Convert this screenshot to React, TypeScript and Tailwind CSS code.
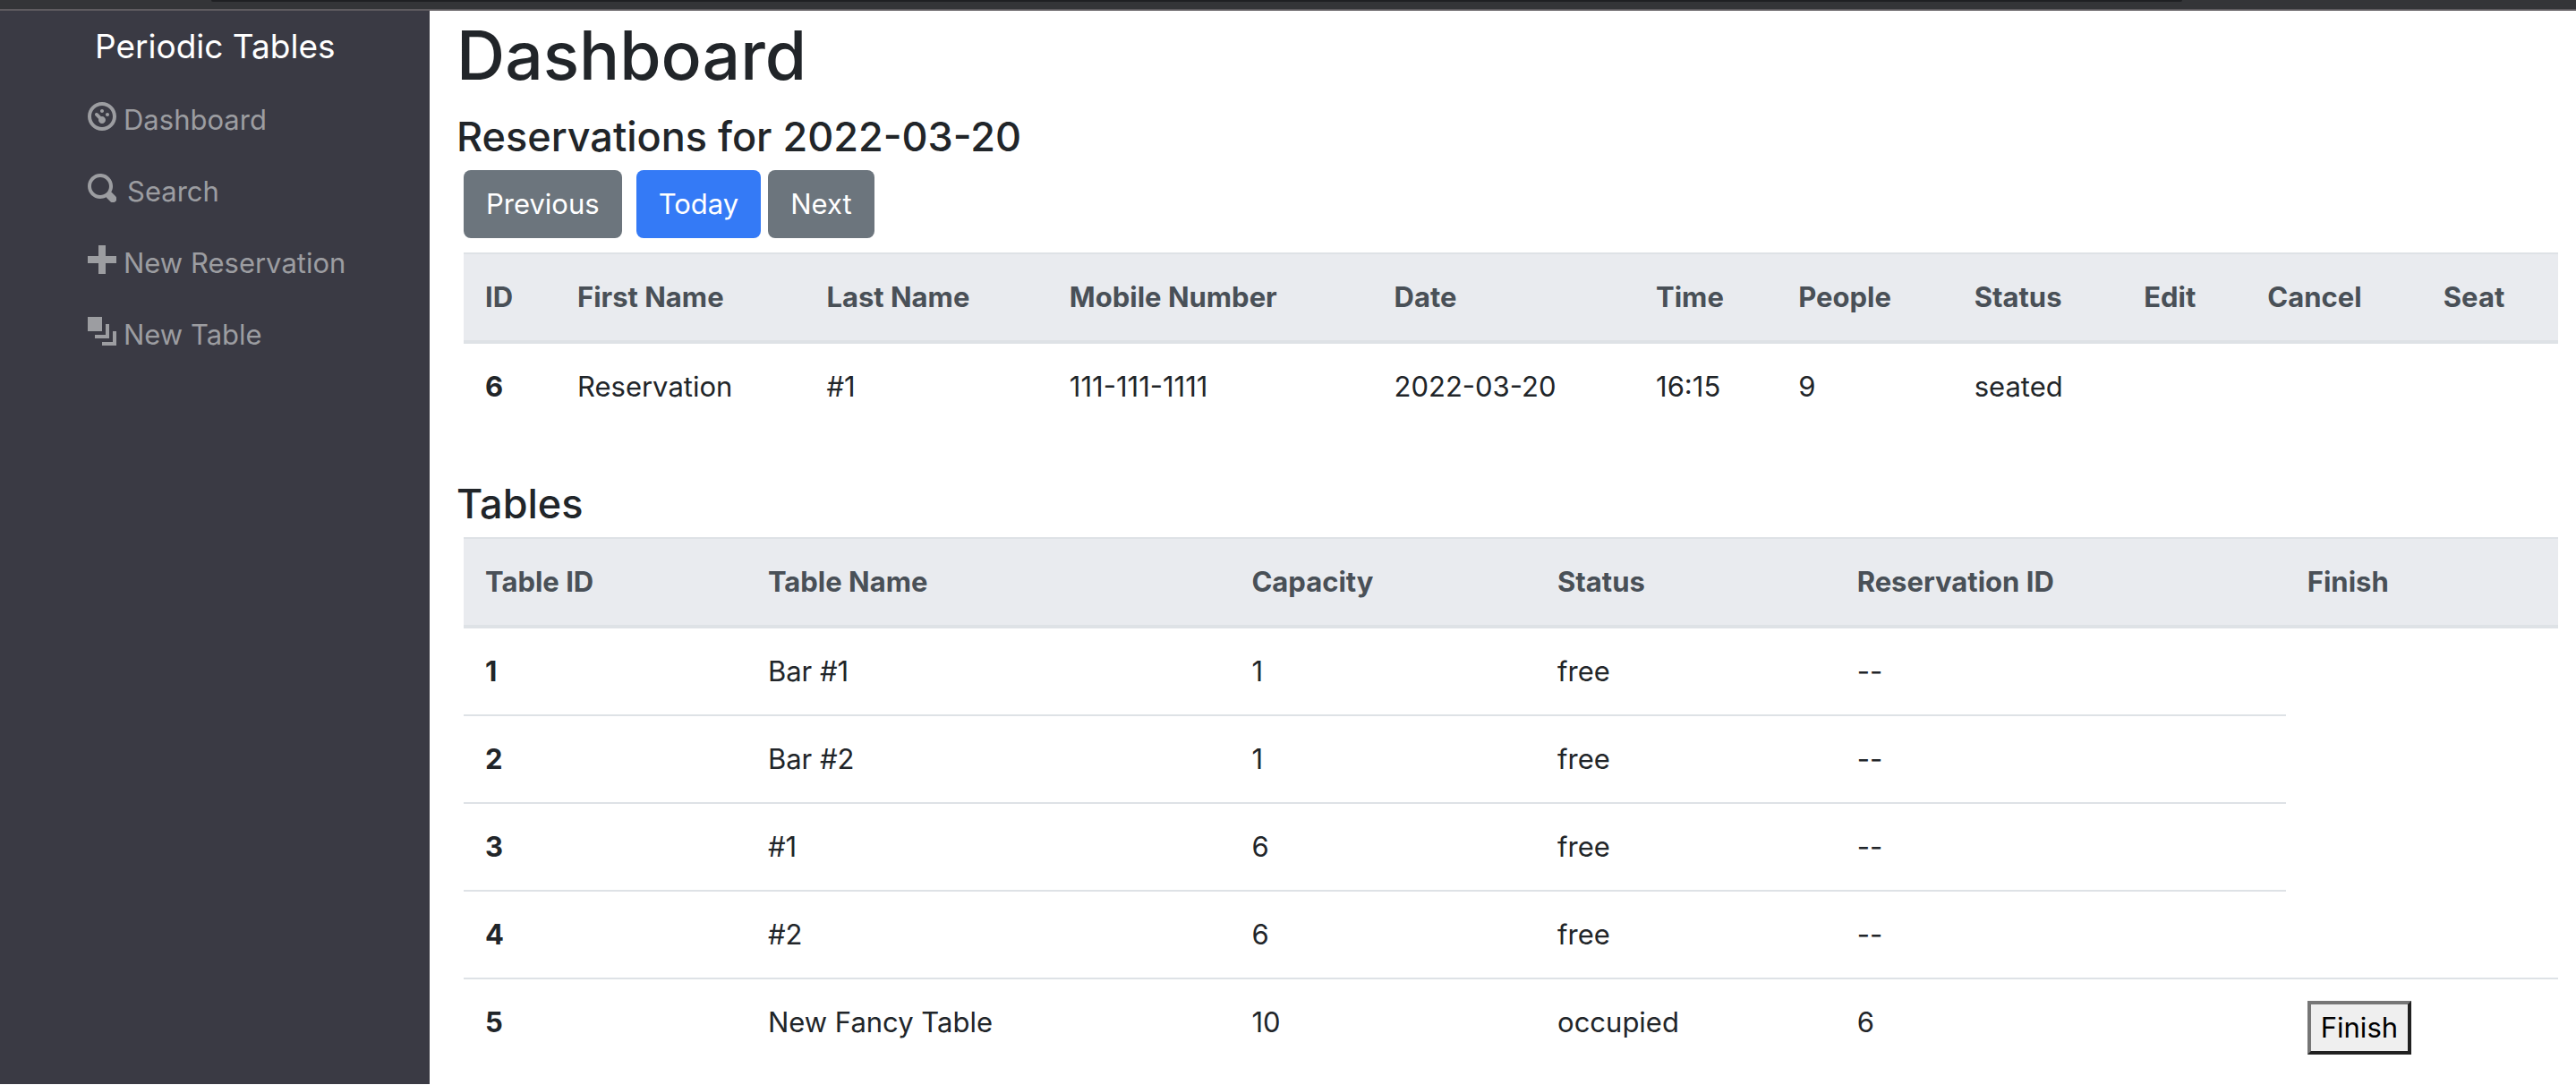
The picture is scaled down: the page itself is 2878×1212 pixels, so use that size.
import React from "react";

const ICONS = {
  dashboard:
    "M4 0c-2.2 0-4 1.8-4 4s1.8 4 4 4 4-1.8 4-4-1.8-4-4-4zm0 1c1.66 0 3 1.34 3 3s-1.34 3-3 3-3-1.34-3-3 1.34-3 3-3zm0 1c-.28 0-.5.22-.5.5s.22.5.5.5.5-.22.5-.5-.22-.5-.5-.5zm-1.66 1a.5.5 0 0 0-.19.84l.91.91c-.02.08-.06.16-.06.25 0 .55.45 1 1 1s1-.45 1-1-.45-1-1-1c-.09 0-.17.04-.25.06l-.91-.91a.5.5 0 0 0-.44-.16.5.5 0 0 0-.06 0zm3.16 0c-.28 0-.5.22-.5.5s.22.5.5.5.5-.22.5-.5-.22-.5-.5-.5z",
  search:
    "M3.5 0c-1.93 0-3.5 1.57-3.5 3.5s1.57 3.5 3.5 3.5c.59 0 1.17-.14 1.66-.41a1 1 0 0 0 .13.13l1 1a1.02 1.02 0 1 0 1.44-1.44l-1-1a1 1 0 0 0-.16-.13c.27-.49.44-1.06.44-1.66 0-1.93-1.55-3.5-3.5-3.5zm0 1c1.39 0 2.5 1.11 2.5 2.5 0 .66-.24 1.27-.66 1.72-.01.01-.02.02-.03.03a1 1 0 0 0-.13.13c-.44.4-1.04.63-1.69.63-1.39 0-2.5-1.11-2.5-2.5s1.11-2.5 2.5-2.5z",
  plus: "M3 0v3h-3v2h3v3h2v-3h3v-2h-3v-3h-2z",
  layers: "M0 0v4h4v-4h-4zm5 2v3h-3v1h4v-4h-1zm2 2v3h-3v1h4v-4h-1z",
};

const NAV: { label: string; icon: keyof typeof ICONS; gap: string }[] = [
  { label: "Dashboard", icon: "dashboard", gap: "gap-2" },
  { label: "Search", icon: "search", gap: "gap-3" },
  { label: "New Reservation", icon: "plus", gap: "gap-2" },
  { label: "New Table", icon: "layers", gap: "gap-2" },
];

const RESERVATION_COLUMNS = [
  { label: "ID", width: "w-[4.4%]" },
  { label: "First Name", width: "w-[11.9%]" },
  { label: "Last Name", width: "w-[11.6%]" },
  { label: "Mobile Number", width: "w-[15.5%]" },
  { label: "Date", width: "w-[12.5%]" },
  { label: "Time", width: "w-[6.8%]" },
  { label: "People", width: "w-[8.4%]" },
  { label: "Status", width: "w-[8.1%]" },
  { label: "Edit", width: "w-[5.9%]" },
  { label: "Cancel", width: "w-[8.4%]" },
  { label: "Seat", width: "w-[6.5%]" },
];

const RESERVATIONS = [
  ["6", "Reservation", "#1", "111-111-1111", "2022-03-20", "16:15", "9", "seated", "", "", ""],
];

const TABLE_COLUMNS = [
  { label: "Table ID", width: "w-[13.5%]" },
  { label: "Table Name", width: "w-[23.1%]" },
  { label: "Capacity", width: "w-[14.6%]" },
  { label: "Status", width: "w-[14.3%]" },
  { label: "Reservation ID", width: "w-[21.5%]" },
  { label: "Finish", width: "w-[13%]" },
];

const TABLES = [
  ["1", "Bar #1", "1", "free", "--"],
  ["2", "Bar #2", "1", "free", "--"],
  ["3", "#1", "6", "free", "--"],
  ["4", "#2", "6", "free", "--"],
  ["5", "New Fancy Table", "10", "occupied", "6"],
];

function DataTable({
  id,
  columns,
  rows,
  action,
}: {
  id: string;
  columns: { label: string; width: string }[];
  rows: string[][];
  action?: (row: string[]) => React.ReactNode;
}) {
  return (
    <table aria-labelledby={id} className="w-full table-fixed border-separate border-spacing-0 text-left">
      <thead>
        <tr>
          {columns.map((c) => (
            <th
              key={c.label}
              scope="col"
              className={`${c.width} whitespace-nowrap border-t-2 border-b-4 border-[#dee2e6] bg-[#e9ebef] p-6 font-bold text-[#495057]`}
            >
              {c.label}
            </th>
          ))}
        </tr>
      </thead>
      <tbody className="[&>tr+tr>*]:border-t-2 [&>tr>*]:border-[#dee2e6]">
        {rows.map((row) => {
          const extra = action?.(row);
          return (
            <tr key={row[0]} className="align-top">
              <th scope="row" className="p-6 font-bold">
                {row[0]}
              </th>
              {row.slice(1).map((cell, i) => (
                <td key={i} className="whitespace-nowrap p-6">
                  {cell}
                </td>
              ))}
              {extra && <td className="p-6">{extra}</td>}
            </tr>
          );
        })}
      </tbody>
    </table>
  );
}

export default function App() {
  return (
    <div className="flex min-h-screen flex-col bg-white font-['Inter','Liberation_Sans',sans-serif] text-[31px] leading-[48px] text-[#212529]">
      <div className="h-3 border-b-2 border-[#5f5c60] bg-[#343538]">
        <div className="mr-[15.3%] ml-[8.2%] h-[2px] rounded-b-sm bg-[#1f2023]" />
      </div>
      <div className="flex flex-1">
        <nav className="mb-px w-[480px] shrink-0 bg-[#3a3a44]">
          <a href="#home" className="mt-[10px] ml-[106px] block text-[37px] leading-[60px] text-white">
            Periodic Tables
          </a>
          <ul className="mt-3">
            {NAV.map((item) => (
              <li key={item.label}>
                <a
                  href={`#${item.icon}`}
                  className={`flex items-start py-4 pl-[98px] text-[#9c9da1] ${item.gap}`}
                >
                  <svg viewBox="0 0 8 8" className="mt-1 size-8" fill="currentColor" aria-hidden="true">
                    <path d={ICONS[item.icon]} />
                  </svg>
                  <span>{item.label}</span>
                </a>
              </li>
            ))}
          </ul>
        </nav>
        <main className="min-w-0 flex-1 pr-5 pl-[30px]">
          <h1 className="text-[75px] leading-[100px] font-medium">Dashboard</h1>
          <h4 id="reservations" className="mt-3 text-[45px] leading-[58px] font-medium">
            Reservations for 2022-03-20
          </h4>
          <div className="mt-2 ml-2">
            <div className="flex">
              <button type="button" className="mr-4 rounded-lg bg-[#6c757d] px-[25px] py-[14px] text-white">
                Previous
              </button>
              <button type="button" className="mr-2 rounded-lg bg-[#347af6] px-[25px] py-[14px] text-white">
                Today
              </button>
              <button type="button" className="rounded-lg bg-[#6c757d] px-[25px] py-[14px] text-white">
                Next
              </button>
            </div>
            <div className="mt-4">
              <DataTable id="reservations" columns={RESERVATION_COLUMNS} rows={RESERVATIONS} />
            </div>
          </div>
          <h4 id="tables" className="mt-[54px] text-[45px] leading-[58px] font-medium">
            Tables
          </h4>
          <div className="mt-2 ml-2">
            <DataTable
              id="tables"
              columns={TABLE_COLUMNS}
              rows={TABLES}
              action={(row) =>
                row[3] === "occupied" && (
                  <button
                    type="button"
                    className="block border-4 border-t-[#767676] border-r-[#212121] border-b-[#212121] border-l-[#767676] bg-[#efefef] px-[11px] py-[2px] text-black"
                  >
                    Finish
                  </button>
                )
              }
            />
          </div>
        </main>
      </div>
    </div>
  );
}
